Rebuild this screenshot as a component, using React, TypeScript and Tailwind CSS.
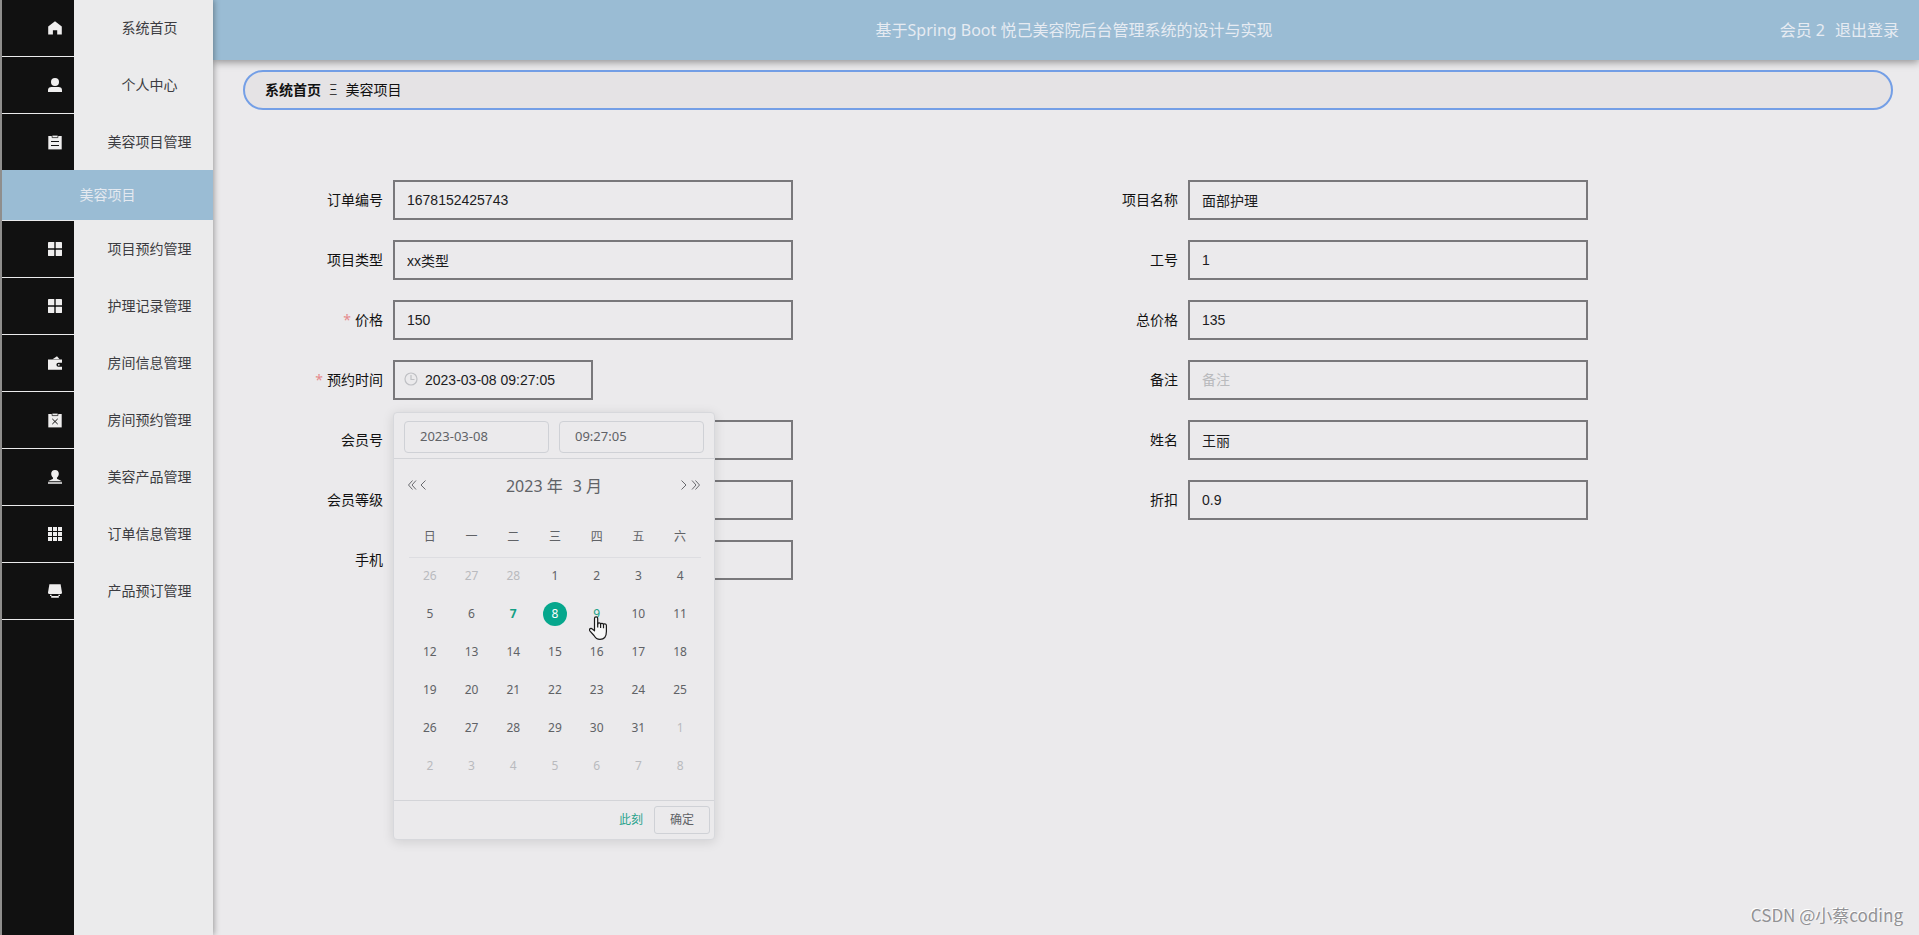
import type { ReactNode } from "react"
import clsx from "clsx"

const clipboard = (
  <>
    <path d="M0.3 1H13.7V14.4H0.3Z" />
    <path d="M4.1 0.2H9.900V2.600H4.100Z" stroke="#111" strokeWidth="0.7" />
  </>
)

const menuIcons: Record<string, ReactNode> = {
  home: <path d="M7 0.2 13.8 5.4V13.6H9.2V9.2H4.9V13.6H0.2V5.4Z" />,
  user: (
    <>
      <circle cx="7" cy="4" r="4" />
      <path d="M0 14V12.2C0 10.2 1.3 9 3.4 9h7.2c2.1 0 3.4 1.2 3.4 3.2V14Z" />
    </>
  ),
  order: (
    <>
      {clipboard}
      <path d="M3 6.5h8M3 10.5h8" stroke="#111" />
    </>
  ),
  menu: (
    <>
      <rect x="0" y="0" width="6.3" height="6.3" rx="0.4" />
      <rect x="7.7" y="0" width="6.3" height="6.3" rx="0.4" />
      <rect x="0" y="7.7" width="6.3" height="6.3" rx="0.4" />
      <rect x="7.7" y="7.7" width="6.3" height="6.3" rx="0.4" />
    </>
  ),
  wallet: (
    <>
      <path d="M4.5 3.2 9 0.3 11.6 3.2Z" />
      <path d="M0 3.6h14v3.2h-3.6a2 2 0 0 0 0 4H14v3H0Z" />
      <circle cx="10.8" cy="8.8" r="0.9" />
    </>
  ),
  release: (
    <>
      {clipboard}
      <path d="M4.3 5.9l5.4 5.2M9.7 5.9l-5.4 5.2" stroke="#111" />
    </>
  ),
  custom: (
    <path d="M7 0a3.8 3.8 0 0 1 3.8 3.8c0 1.8-.9 3-1.9 4 0 1 .5 1.4 1.6 1.8L14 11.2H0l3.5-1.6c1.1-.4 1.6-.8 1.6-1.8-1-1-1.9-2.2-1.9-4A3.8 3.8 0 0 1 7 0ZM0 12.2h14V13.8H0Z" />
  ),
  grid: (
    <path d="M0 0h4v4H0ZM5 0h4v4H5ZM10 0h4v4h-4ZM0 5h4v4H0ZM5 5h4v4H5ZM10 5h4v4h-4ZM0 10h4v4H0ZM5 10h4v4H5ZM10 10h4v4h-4Z" />
  ),
  shop: (
    <>
      <path d="M1.4 0.2h11.2L14 8.4c0 1.1-.8 1.5-1.7 1.5H1.7C.8 9.9 0 9.5 0 8.4Z" />
      <path d="M2 10.8h1.6v1.3h6.8v-1.3H12v1.2l-1.2.1v1.7H3.2v-1.7L2 12Z" />
    </>
  ),
}

const menu = [
  { icon: "home", label: "系统首页" },
  { icon: "user", label: "个人中心" },
  { icon: "order", label: "美容项目管理", child: "美容项目" },
  { icon: "menu", label: "项目预约管理" },
  { icon: "menu", label: "护理记录管理" },
  { icon: "wallet", label: "房间信息管理" },
  { icon: "release", label: "房间预约管理" },
  { icon: "custom", label: "美容产品管理" },
  { icon: "grid", label: "订单信息管理" },
  { icon: "shop", label: "产品预订管理" },
]

const weekdays = ["日", "一", "二", "三", "四", "五", "六"]

const weeks = [
  [26, 27, 28, 1, 2, 3, 4],
  [5, 6, 7, 8, 9, 10, 11],
  [12, 13, 14, 15, 16, 17, 18],
  [19, 20, 21, 22, 23, 24, 25],
  [26, 27, 28, 29, 30, 31, 1],
  [2, 3, 4, 5, 6, 7, 8],
]

const inputStyle =
  "h-10 border-2 border-[#79787b] bg-transparent px-3 font-['Liberation_Sans','Noto_Sans_CJK_SC',sans-serif] text-sm text-[#1c1c1e] outline-none placeholder:text-[#b9babd]"

function Sidebar() {
  return (
    <aside className="z-20 flex w-[213px] shrink-0 flex-col border-l-2 border-[#8f8e8d] bg-[linear-gradient(to_right,#111_72px,#ebebec_72px)] shadow-[1px_0_6px_rgba(0,0,0,0.35)]">
      <nav>
        <ul>
          {menu.map((item) => (
            <li key={item.label} className="border-b border-[#ebebec]">
              <a href="#" className="flex h-14 items-center text-sm text-[#3c3c41]">
                <span className="flex w-[72px] justify-end pr-3">
                  <svg
                    className="size-[14px] overflow-visible fill-[#efeeee]"
                    viewBox="0 0 14 14"
                  >
                    {menuIcons[item.icon]}
                  </svg>
                </span>
                <span className="flex-1 pl-3 text-center">{item.label}</span>
              </a>
              {item.child && (
                <a
                  href="#"
                  className="flex h-[50px] items-center justify-center bg-[#9abcd4] text-sm text-[#e4e9f0]"
                >
                  {item.child}
                </a>
              )}
            </li>
          ))}
        </ul>
      </nav>
    </aside>
  )
}

function Field({
  id,
  label,
  value = "",
  placeholder,
  required,
  children,
}: {
  id: string
  label: string
  value?: string
  placeholder?: string
  required?: boolean
  children?: ReactNode
}) {
  return (
    <div className="flex">
      <label
        htmlFor={id}
        className="w-[120px] shrink-0 pr-[10px] text-right text-sm leading-10 text-[#111]"
      >
        {required && <span className="mr-1 text-[#e58a8c]">*</span>}
        {label}
      </label>
      {children ?? (
        <input
          id={id}
          className={clsx(inputStyle, "w-[400px]")}
          defaultValue={value}
          placeholder={placeholder}
        />
      )}
    </div>
  )
}

function Arrow({ label, d }: { label: string; d: string }) {
  return (
    <button type="button" aria-label={label}>
      <svg className="size-3 fill-none stroke-[#68696d]" viewBox="0 0 12 12">
        <path d={d} />
      </svg>
    </button>
  )
}

function HandCursor() {
  return (
    <svg
      className="pointer-events-none absolute top-[14px] left-1 z-10 h-6 w-[18px]"
      viewBox="0 0 18 24"
      fill="#f7f7f7"
      stroke="#1a1a1a"
      strokeWidth="1.2"
      strokeLinejoin="round"
    >
      <path d="M5.5 14.8V2.4a1.6 1.6 0 0 1 3.2 0V8.2c0-1.7 2.9-1.7 2.9.2 0-1.5 2.9-1.4 2.9.4 0-1.3 2.9-1.2 2.9.7V15.5c0 4.7-2.3 7.9-6.4 7.9-3.3 0-4.7-1.5-6-3.9L.8 14.8c-1-2 1.2-3.2 2.5-1.8Z" />
      <path d="M8.7 7.5v4M11.6 8.3v3.6M14.5 9v3.3" fill="none" />
    </svg>
  )
}

function DayTable() {
  return (
    <table className="mx-[15px] mt-4 w-[292px] table-fixed text-center text-xs text-[#606266]">
      <thead>
        <tr className="h-10 border-b border-[#dddde1]">
          {weekdays.map((day) => (
            <th key={day} className="p-0 font-normal">
              {day}
            </th>
          ))}
        </tr>
      </thead>
      <tbody>
        {weeks.map((week, row) => (
          <tr key={row} className="h-[38px]">
            {week.map((day) => {
              const outside = (row === 0 && day > 7) || (row > 3 && day < 15)
              const current = row === 1
              return (
                <td key={day} className="p-0">
                  <div className="relative mx-auto size-6">
                    <button
                      type="button"
                      className={clsx(
                        "size-6 rounded-full",
                        outside && "text-[#b9babe]",
                        current && day === 7 && "font-bold text-[#14a085]",
                        current && day === 8 && "bg-[#06a78d] text-white",
                        current && day === 9 && "text-[#14a085]"
                      )}
                    >
                      {day}
                    </button>
                    {current && day === 9 && <HandCursor />}
                  </div>
                </td>
              )
            })}
          </tr>
        ))}
      </tbody>
    </table>
  )
}

function DatePanel() {
  const timeInput =
    "h-8 w-full min-w-0 rounded border border-[#cfd1d6] bg-transparent px-[15px] pb-[2px] text-[13px] text-[#606266] outline-none"

  return (
    <div className="absolute top-full left-0 z-10 mt-3 w-[322px] rounded border border-[#d7d8dc] bg-[#ebeaec] shadow-[0_2px_12px_rgba(0,0,0,0.12)]">
      <div className="grid grid-cols-2 gap-[10px] border-b border-[#d3d4d8] px-[10px] pt-2 pb-[5px]">
        <input aria-label="选择日期" className={timeInput} defaultValue="2023-03-08" />
        <input aria-label="选择时间" className={timeInput} defaultValue="09:27:05" />
      </div>
      <div className="mx-3 mt-3 flex h-[30px] items-center justify-between">
        <div className="flex pb-[2px]">
          <Arrow label="前一年" d="M6.5 1.5 2.5 6l4 4.5M10 1.5 6 6l4 4.5" />
          <Arrow label="上个月" d="M7.5 1.5 3 6l4.5 4.5" />
        </div>
        <div className="flex gap-[10px] text-base text-[#606266]">
          <button type="button">2023 年</button>
          <button type="button">3 月</button>
        </div>
        <div className="flex pb-[2px]">
          <Arrow label="下个月" d="M3.5 1.5 8 6l-4.5 4.5" />
          <Arrow label="后一年" d="M2 1.5 6 6l-4 4.5M5.5 1.5 9.5 6l-4 4.5" />
        </div>
      </div>
      <DayTable />
      <div className="mt-[15px] flex items-center justify-end border-t border-[#d3d4d8] py-[5px] pr-1 text-xs">
        <button type="button" className="px-[11px] text-[#2aa38c]">
          此刻
        </button>
        <button
          type="button"
          className="h-7 w-14 rounded-[3px] border border-[#cfd1d6] text-[#606266]"
        >
          确定
        </button>
      </div>
    </div>
  )
}

export default function App() {
  return (
    <div className="flex min-h-screen bg-[#ebeaec] font-['Noto_Sans','Noto_Sans_CJK_SC',sans-serif]">
      <Sidebar />
      <div className="flex min-w-0 flex-1 flex-col">
        <header className="z-10 grid h-[60px] grid-cols-[1fr_auto_1fr] items-center bg-[#9abcd4] pr-5 pl-9 text-base text-[#e6ebf2] shadow-[0_2px_8px_rgba(0,0,0,0.4)]">
          <h1 className="col-start-2">基于Spring Boot 悦己美容院后台管理系统的设计与实现</h1>
          <div className="flex justify-end gap-[10px]">
            <span>会员 2</span>
            <a href="#">退出登录</a>
          </div>
        </header>
        <main className="mt-[10px] mr-[26px] ml-[30px]">
          <div className="flex h-10 items-center rounded-full border-2 border-[#749fe6] bg-[#e5e3e5] px-5 text-sm text-[#111]">
            <a href="#" className="font-bold">
              系统首页
            </a>
            <span className="px-2 font-light">Ξ</span>
            <span>美容项目</span>
          </div>
          <form className="mt-[70px] grid grid-cols-2 gap-y-5 px-[30px]">
            <Field id="orderNo" label="订单编号" value="1678152425743" />
            <Field id="itemName" label="项目名称" value="面部护理" />
            <Field id="itemType" label="项目类型" value="xx类型" />
            <Field id="staffNo" label="工号" value="1" />
            <Field id="price" label="价格" value="150" required />
            <Field id="total" label="总价格" value="135" />
            <Field id="bookTime" label="预约时间" required>
              <div className="relative">
                <input
                  id="bookTime"
                  className={clsx(inputStyle, "w-[200px] pl-[30px]")}
                  defaultValue="2023-03-08 09:27:05"
                />
                <svg
                  className="absolute top-3 left-[11px] size-[14px] fill-none stroke-[#bfc0c4]"
                  viewBox="0 0 14 14"
                  strokeWidth="1.2"
                >
                  <circle cx="7" cy="7" r="6" />
                  <path d="M7 3v4.500h3.500" />
                </svg>
                <DatePanel />
              </div>
            </Field>
            <Field id="remark" label="备注" placeholder="备注" />
            <Field id="memberNo" label="会员号" />
            <Field id="name" label="姓名" value="王丽" />
            <Field id="memberLevel" label="会员等级" />
            <Field id="discount" label="折扣" value="0.9" />
            <Field id="phone" label="手机" />
          </form>
        </main>
      </div>
      <span className="absolute right-4 bottom-2 font-['Noto_Sans_CJK_SC',sans-serif] text-[17px] text-[#929295] [text-shadow:-1px_-1px_0_#fff]">
        CSDN @小蔡coding
      </span>
    </div>
  )
}
